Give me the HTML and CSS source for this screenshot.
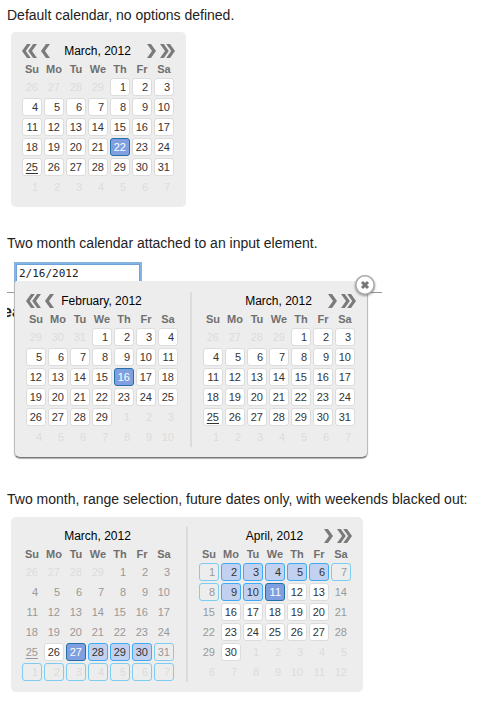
FILE: index.html
```html
<!DOCTYPE html>
<html lang="en">
<head>
  <meta charset="UTF-8" />
  <title>Calendar Examples</title>
  <link rel="stylesheet" href="styles.css">
</head>
<body>
  <svg class="defs" width="0" height="0">
    <symbol id="single" viewBox="0 0 9 14"><path d="M0 0H4L9 7L4 14H0L5 7Z" /></symbol>
    <symbol id="double" viewBox="0 0 15 14"><path d="M0 0H3.8L8.8 7L3.8 14H0L5 7ZM6.2 0H10L15 7L10 14H6.2L11.2 7Z" /></symbol>
  </svg>

  <section class="example first">
    <p>Default calendar, no options defined.</p>
    <div class="calendar" id="cal1"></div>
  </section>

  <section class="example second">
    <p>Two month calendar attached to an input element.</p>
    <input type="text" class="date-input" value="2/16/2012" />
    <div class="behind"><span>ea</span></div>
    <div class="calendar popup" id="cal2">
      <svg class="close" viewBox="0 0 22 22">
        <circle cx="11" cy="11" r="9.2" />
        <path d="M8 8L14 14M14 8L8 14" />
      </svg>
    </div>
  </section>

  <section class="example third">
    <p>Two month, range selection, future dates only, with weekends blacked out:</p>
    <div class="calendar" id="cal3"></div>
  </section>

  <script src="calendar.js"></script>
</body>
</html>
```

FILE: styles.css
```css
body {
  margin: 0;
  background-color: #fff;
  color: #222;
  font-family: "Liberation Sans", Arial, sans-serif;
  overflow: hidden;
}
.defs {
  position: absolute;
}
.example {
  padding-left: 7px;
  box-sizing: border-box;
}
.first {
  height: 228px;
  padding-top: 6px;
}
.second {
  height: 256px;
  padding-top: 6px;
  position: relative;
}
.third {
  padding-top: 6px;
}
.example p {
  margin: 0 0 8px;
  font-size: 14px;
  line-height: 18px;
  white-space: nowrap;
}
.third p {
  margin-bottom: 9px;
}
.calendar {
  display: flex;
  width: max-content;
  margin-left: 4px;
  border-radius: 5px;
  background-color: #ededed;
}
.month {
  width: 175px;
  height: 175px;
  padding: 11px 12px 0 11px;
  box-sizing: border-box;
}
.divider {
  width: 2px;
  margin: 10px 0;
  background-color: #dcdcdc;
}
.header {
  display: grid;
  grid-template-columns: 28px 1fr 29px;
  align-items: center;
  height: 16px;
}
.title {
  color: #000;
  font-size: 12px;
  line-height: 16px;
  text-align: center;
  white-space: nowrap;
}
.nav {
  display: flex;
  gap: 4px;
}
.nav svg {
  height: 14px;
  fill: #7b7b7b;
  flex: none;
}
.nav .one {
  width: 9px;
}
.nav .two {
  width: 15px;
}
.prev svg {
  transform: scaleX(-1);
}
.next {
  justify-content: flex-end;
  margin-right: -1px;
}
.days {
  display: grid;
  grid-template-columns: repeat(7, 20px);
  grid-auto-rows: 18px;
  gap: 2px;
}
.weekdays {
  display: grid;
  grid-template-columns: repeat(7, 20px);
  column-gap: 2px;
  height: 19px;
  color: #707070;
  font-size: 11px;
  font-weight: bold;
  line-height: 21px;
  text-align: center;
}
.day {
  box-sizing: border-box;
  padding-right: 3px;
  border: 1px solid transparent;
  border-radius: 3px;
  color: #999;
  font-size: 11px;
  line-height: 17px;
  text-align: right;
}
.open {
  border-color: #dcdcdc;
  background-color: #fff;
  color: #333;
}
.other {
  color: #dcdcdc;
}
.today {
  text-decoration: underline;
  text-underline-offset: 2px;
}
.range {
  border-color: #7dcdf3;
}
.range.open {
  border-color: #3fabf5;
  background-color: #c2d1f0;
}
.selected.open {
  border-color: #2470a8;
  background-color: #809fe0;
  color: #fff;
}
.date-input {
  display: block;
  box-sizing: border-box;
  width: 124px;
  height: 22px;
  margin: 12px 0 0 9px;
  padding: 0 2px 4px;
  border: 1px solid #6fa3d8;
  outline: 2px solid #86b4e2;
  font-family: "DejaVu Sans Mono", monospace;
  font-size: 11px;
  color: #222;
}
.behind {
  width: 375px;
  height: 40px;
  margin-top: 6px;
  border-top: 1px solid #999;
  overflow: hidden;
  font-size: 16px;
  font-weight: bold;
  line-height: 38px;
}
.behind span {
  margin-left: -4px;
}
.popup {
  position: absolute;
  top: 53px;
  left: 14px;
  margin: 0;
  border: 1px solid #bbb;
  border-top-color: #ededed;
  border-bottom-color: #777;
  border-radius: 3px 5px 6px 6px;
  box-shadow: 0 1px 1px rgba(0,0,0,0.3);
}
.close {
  position: absolute;
  top: -8px;
  right: -9px;
  width: 22px;
  height: 22px;
  filter: drop-shadow(0 1px 1px rgba(0,0,0,0.4));
}
.close circle {
  fill: #fff;
  stroke: #aaa;
  stroke-width: 1.6;
}
.close path {
  stroke: #777;
  stroke-width: 3;
}
```

FILE: calendar.js
```javascript
const weekdays = ['Su', 'Mo', 'Tu', 'We', 'Th', 'Fr', 'Sa'];
const monthNames = ['January', 'February', 'March', 'April'];

function arrow(type) {
  const cls = type === 'single' ? 'one' : 'two';
  return `<svg class="${cls}"><use href="#${type}" /></svg>`;
}

// month is zero based, classFor returns the extra classes of a date
function renderMonth(month, prev, next, classFor) {
  const el = document.createElement('div');
  el.className = 'month';
  const first = new Date(2012, month, 1).getDay();
  let days = '';
  for (let i = 0; i < 42; i++) {
    const date = new Date(2012, month, i - first + 1);
    const other = date.getMonth() !== month;
    days += `<div class="day ${other ? 'other' : ''} ${classFor(date, other)}">${date.getDate()}</div>`;
  }
  el.innerHTML = `
    <div class="header">
      <div class="nav prev">${prev ? arrow('double') + arrow('single') : ''}</div>
      <div class="title">${monthNames[month]}, 2012</div>
      <div class="nav next">${next ? arrow('single') + arrow('double') : ''}</div>
    </div>
    <div class="weekdays">${weekdays.map(d => `<span>${d}</span>`).join('')}</div>
    <div class="days">${days}</div>`;
  return el;
}

function divider() {
  const el = document.createElement('div');
  el.className = 'divider';
  return el;
}

function key(date) {
  return (date.getMonth() + 1) * 100 + date.getDate();
}

function pick(selected) {
  return (date, other) => {
    if (other) return '';
    return 'open' + (key(date) === selected ? ' selected' : '') + (key(date) === 325 ? ' today' : '');
  };
}

// range from 3/27 to 4/11, weekends and past dates are closed
function pickRange(date, other) {
  const k = key(date);
  const weekend = date.getDay() === 0 || date.getDay() === 6;
  let cls = '';
  if (!other && !weekend && k >= 325) cls += ' open';
  // leading days of the previous month stay unmarked
  if (k >= 327 && k <= 411) cls += ' range';
  if (!other && (k === 327 || k === 411)) cls += ' selected';
  if (!other && k === 325) cls += ' today';
  return cls;
}

document.getElementById('cal1').append(renderMonth(2, true, true, pick(322)));
document.getElementById('cal2').append(
  renderMonth(1, true, false, pick(216)), divider(), renderMonth(2, false, true, pick(0)));
document.getElementById('cal3').append(
  renderMonth(2, false, false, pickRange), divider(), renderMonth(3, false, true, pickRange));
```
